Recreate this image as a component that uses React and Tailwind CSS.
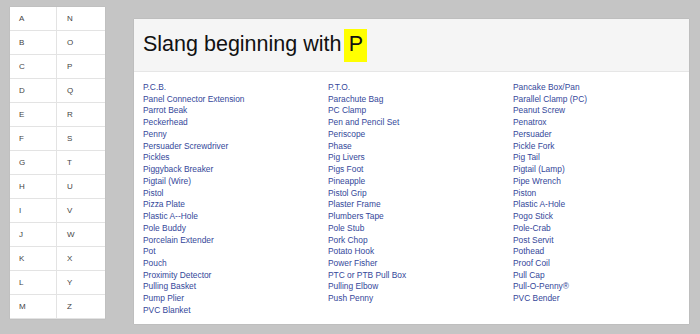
import { Fragment } from "react";

const letters = "ABCDEFGHIJKLMNOPQRSTUVWXYZ".split("");

const col1 = [
  "P.C.B.", "Panel Connector Extension", "Parrot Beak", "Peckerhead", "Penny",
  "Persuader Screwdriver", "Pickles", "Piggyback Breaker", "Pigtail (Wire)", "Pistol",
  "Pizza Plate", "Plastic A--Hole", "Pole Buddy", "Porcelain Extender", "Pot",
  "Pouch", "Proximity Detector", "Pulling Basket", "Pump Plier", "PVC Blanket",
];
const col2 = [
  "P.T.O.", "Parachute Bag", "PC Clamp", "Pen and Pencil Set", "Periscope",
  "Phase", "Pig Livers", "Pigs Foot", "Pineapple", "Pistol Grip",
  "Plaster Frame", "Plumbers Tape", "Pole Stub", "Pork Chop", "Potato Hook",
  "Power Fisher", "PTC or PTB Pull Box", "Pulling Elbow", "Push Penny",
];
const col3 = [
  "Pancake Box/Pan", "Parallel Clamp (PC)", "Peanut Screw", "Penatrox", "Persuader",
  "Pickle Fork", "Pig Tail", "Pigtail (Lamp)", "Pipe Wrench", "Piston",
  "Plastic A-Hole", "Pogo Stick", "Pole-Crab", "Post Servit", "Pothead",
  "Proof Coil", "Pull Cap", "Pull-O-Penny®", "PVC Bender",
];

export default function App() {
  const left = letters.slice(0, 13);
  const right = letters.slice(13);

  return (
    <div
      className="w-[700px] h-[334px] bg-[#c5c5c5] flex items-start overflow-hidden"
      style={{ fontFamily: '"Liberation Sans", Arial, sans-serif' }}
    >
      {/* LETTER NAV */}
      <div className="mt-[7px] ml-[10px] w-[95px] bg-white grid grid-cols-[47px_48px] shadow-[0_0_1px_rgba(0,0,0,0.15)]">
        {left.map((l, i) => (
          <Fragment key={l}>
            <a className="h-[24px] pl-[9px] flex items-center text-[8px] text-[#444] border-r border-b border-[#e3e3e3]">
              {l}
            </a>
            <a className="h-[24px] pl-[10px] flex items-center text-[8px] text-[#444] border-b border-[#e3e3e3]">
              {right[i]}
            </a>
          </Fragment>
        ))}
      </div>

      {/* MAIN PANEL */}
      <div className="mt-[19px] ml-[29px] w-[555px] h-[305px] bg-white shadow-[0_0_1px_rgba(0,0,0,0.2)]">
        <div className="h-[53px] bg-[#f5f5f5] border-b border-[#e6e6e6] pl-[9px] flex items-center">
          <h1 className="text-[21.5px] text-[#111] leading-none flex items-center">
            Slang beginning with
            <span className="ml-[3px] bg-[#ffff00] w-[23px] h-[33px] flex items-center justify-center">
              P
            </span>
          </h1>
        </div>

        <div className="pl-[9px] pt-[10px] grid grid-cols-[185px_185px_1fr]">
          {[col1, col2, col3].map((col, ci) => (
            <ul key={ci}>
              {col.map((t) => (
                <li key={t} className="text-[8.4px] leading-[11.74px] text-[#34479a]">
                  {t}
                </li>
              ))}
            </ul>
          ))}
        </div>
      </div>
    </div>
  );
}
